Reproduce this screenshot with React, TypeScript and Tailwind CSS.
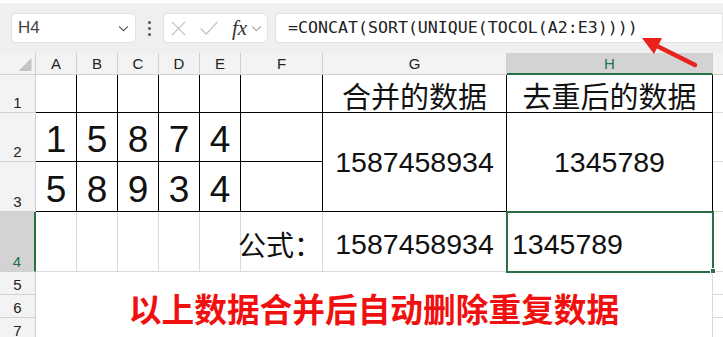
import React from 'react';

const SANS = "font-['Liberation_Sans','Noto_Sans_CJK_SC',sans-serif]";
const CJK = "font-['Noto_Sans_CJK_SC',sans-serif]";

const black = 'border-r border-b border-black';
const grid = 'border-r border-b border-[#dadada]';
const rowHdr = 'flex items-end justify-center pb-[2px] bg-[#f3f3f3] border-r border-b border-[#d0d0d0] text-[15px] text-[#222] leading-none';
const colHdr = 'flex items-center justify-center bg-[#f3f3f3] border-r border-b border-[#d0d0d0] text-[15px] text-[#222] leading-none';

function Chevron({ className }: { className: string }) {
  return (
    <svg viewBox="0 0 12 8" className={className} fill="none" stroke="currentColor" strokeWidth="1.3">
      <path d="M1 1.5 L6 6.5 L11 1.5" />
    </svg>
  );
}

function FormulaBar() {
  return (
    <div className="h-[53px] bg-[#efefef] border-t-[3px] border-white flex items-start pt-[10px] gap-0">
      <div className="ml-[11px] w-[125px] h-[30px] bg-white rounded-[5px] border border-[#e2e2e2] flex items-center pl-[6px] pr-[6px] justify-between">
        <span className={`${SANS} text-[17px] text-[#444]`}>H4</span>
        <Chevron className="w-[11px] h-[7px] text-[#555]" />
      </div>
      <div className="w-[27px] h-[30px] flex flex-col items-center justify-center gap-[3px]">
        <span className="w-[3px] h-[3px] bg-[#555] rounded-full" />
        <span className="w-[3px] h-[3px] bg-[#555] rounded-full" />
        <span className="w-[3px] h-[3px] bg-[#555] rounded-full" />
      </div>
      <div className="w-[105px] h-[30px] bg-white rounded-[5px] border border-[#e2e2e2] flex items-center pl-[7px]">
        <svg viewBox="0 0 16 16" className="w-[15px] h-[15px] text-[#bdbdbd]" fill="none" stroke="currentColor" strokeWidth="1.2">
          <path d="M1 1 L15 15 M15 1 L1 15" />
        </svg>
        <svg viewBox="0 0 20 16" className="ml-[13px] w-[20px] h-[15px] text-[#bdbdbd]" fill="none" stroke="currentColor" strokeWidth="1.2">
          <path d="M1 8 L7 14 L19 1" />
        </svg>
        <span className="ml-[13px] font-['Liberation_Serif',serif] italic text-[21px] text-[#333] leading-none">fx</span>
        <Chevron className="ml-[4px] w-[11px] h-[7px] text-[#aaa]" />
      </div>
      <div className="ml-[7px] flex-1 h-[30px] bg-white rounded-l-[5px] border border-[#e2e2e2] flex items-center pl-[12px]">
        <span className="font-['DejaVu_Sans_Mono',monospace] text-[16.6px] text-[#222]">
          =CONCAT(SORT(UNIQUE(TOCOL(A2:E3))))
        </span>
      </div>
    </div>
  );
}

export default function App() {
  const cols = ['A', 'B', 'C', 'D', 'E', 'F', 'G'];
  const row2 = ['1', '5', '8', '7', '4'];
  const row3 = ['5', '8', '9', '3', '4'];

  return (
    <div className={`relative w-[723px] h-[337px] overflow-hidden bg-white ${SANS}`}>
      <FormulaBar />

      <div className="grid grid-cols-[36px_41px_41px_41px_41px_41px_82px_184px_206px_1fr] grid-rows-[22px_38px_49px_50px_60px_23px_23px_23px]">
        {/* header row */}
        <div className={`${colHdr} relative`}>
          <svg viewBox="0 0 14 14" className="absolute right-[3px] bottom-[3px] w-[14px] h-[13px]">
            <path d="M14 0 L14 14 L0 14 Z" fill="#c4c4c4" />
          </svg>
        </div>
        {cols.map((c) => (
          <div key={c} className={colHdr}>{c}</div>
        ))}
        <div className="flex items-center justify-center bg-[#d3d3d3] border-r border-[#d0d0d0] border-b-2 border-b-[#217346] text-[15px] text-[#217346] leading-none">H</div>
        <div className="bg-[#f3f3f3] border-b border-[#d0d0d0]" />

        {/* row 1 */}
        <div className={rowHdr}>1</div>
        {['a', 'b', 'c', 'd', 'e', 'f'].map((k) => (
          <div key={k} className={black} />
        ))}
        <div className={`${black} ${CJK} flex items-end justify-center pb-[2px] text-[29px] leading-none text-[#111]`}>合并的数据</div>
        <div className={`${black} ${CJK} flex items-end justify-center pb-[2px] text-[29px] leading-none text-[#111]`}>去重后的数据</div>
        <div className="border-b border-[#dadada]" />

        {/* row 2 */}
        <div className={rowHdr}>2</div>
        {row2.map((d, i) => (
          <div key={i} className={`${black} flex items-end justify-center text-[37px] leading-[1.1] text-[#111]`}>{d}</div>
        ))}
        <div className={black} />
        <div className={`${black} row-span-2 flex items-center justify-center text-[28.5px] text-[#111]`}>1587458934</div>
        <div className={`${black} row-span-2 flex items-center justify-center text-[28.5px] text-[#111]`}>1345789</div>
        <div className="border-b border-[#dadada]" />

        {/* row 3 */}
        <div className={rowHdr}>3</div>
        {row3.map((d, i) => (
          <div key={i} className={`${black} flex items-end justify-center text-[37px] leading-[1.1] text-[#111]`}>{d}</div>
        ))}
        <div className={black} />
        <div className="border-b border-[#dadada]" />

        {/* row 4 */}
        <div className="flex items-end justify-center pb-[2px] bg-[#d3d3d3] border-b border-[#d0d0d0] border-r-2 border-r-[#217346] text-[15px] text-[#217346] leading-none">4</div>
        {['a', 'b', 'c', 'd', 'e'].map((k) => (
          <div key={k} className={grid} />
        ))}
        <div className={`${grid} ${CJK} flex items-center justify-end whitespace-nowrap text-[28px] text-[#111] pt-[4px]`}>
          <span className="-ml-[10px]">公式：</span>
        </div>
        <div className={`${grid} flex items-center justify-center pt-[5px] text-[28.5px] text-[#111]`}>1587458934</div>
        <div className="relative flex items-center pl-[5px] pt-[5px] text-[28.5px] text-[#111] border-b border-[#dadada]">
          1345789
          <div className="absolute -left-[1px] -top-[1px] w-[208px] h-[62px] border-2 border-[#2e6e47]" />
          <div className="absolute -right-[3px] -bottom-[3px] w-[6px] h-[6px] bg-[#2e6e47] border border-white" />
        </div>
        <div className="border-b border-[#dadada]" />

        {/* rows 5-7 */}
        <div className={rowHdr}>5</div>
        <div className="col-span-8 row-span-3 border-r border-[#dadada] flex items-start justify-center pt-[20px]">
          <span className={`${CJK} font-bold text-[32.7px] leading-none text-[#f01010]`}>以上数据合并后自动删除重复数据</span>
        </div>
        <div className="border-b border-[#dadada]" />
        <div className={rowHdr}>6</div>
        <div className="border-b border-[#dadada]" />
        <div className={rowHdr}>7</div>
        <div className="border-b border-[#dadada]" />
      </div>

      {/* red arrow pointing at the formula */}
      <svg className="absolute left-[635px] top-[30px] w-[70px] h-[42px]" viewBox="0 0 70 42">
        <path d="M60 35 L20 15" stroke="#e8231c" strokeWidth="4.5" strokeLinecap="round" />
        <path d="M7 8 L27 8 L19 24 Z" fill="#e8231c" />
      </svg>
    </div>
  );
}
